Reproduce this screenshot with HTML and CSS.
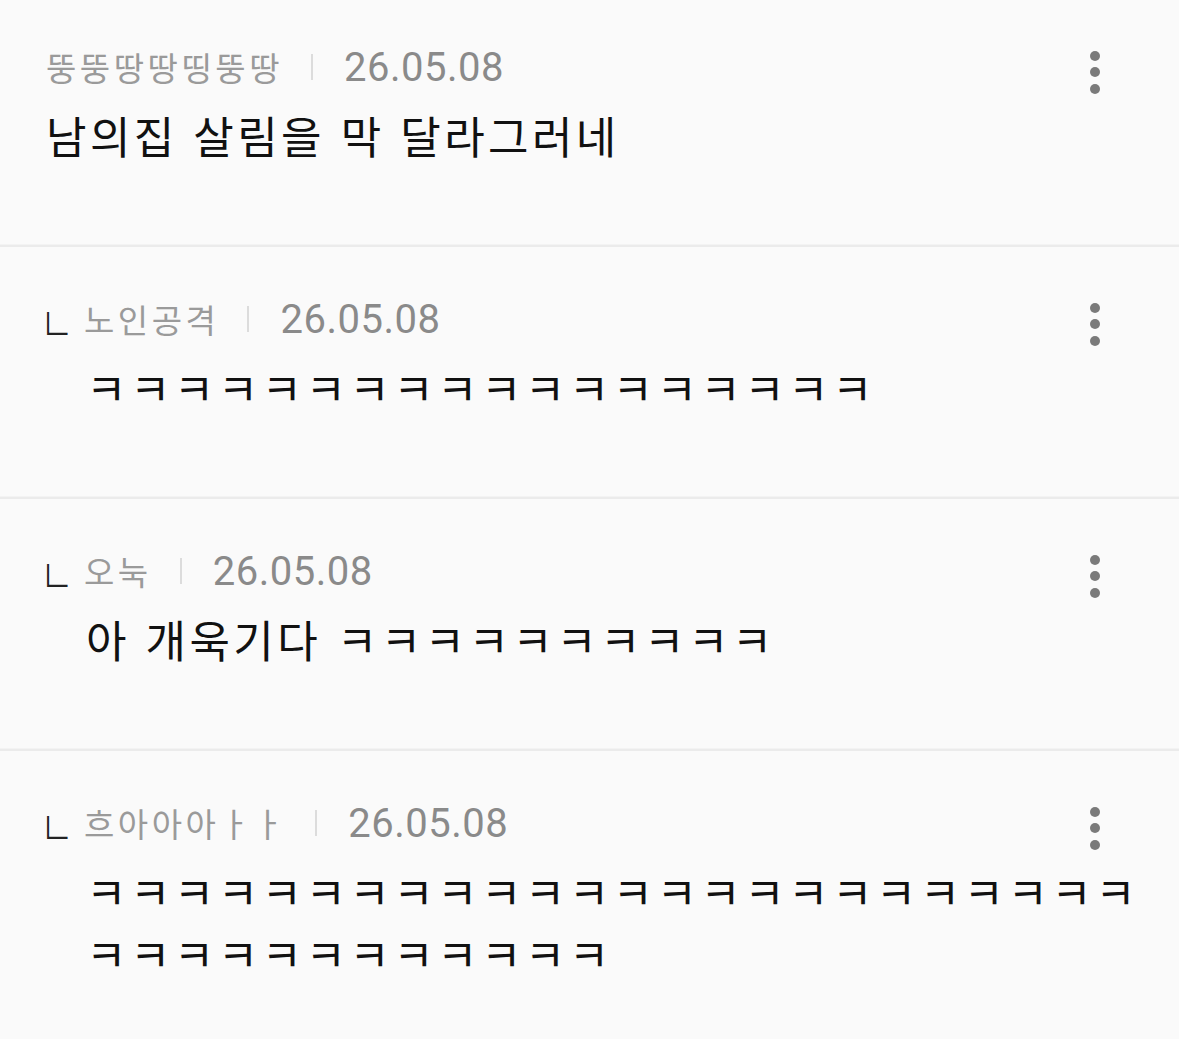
FILE: index.html
```html
<!DOCTYPE html>
<html lang="ko">
<head>
  <meta charset="UTF-8">
  <title>댓글</title>
  <link rel="stylesheet" href="styles.css">
</head>
<body>

<div class="comment-list">

  <div class="comment">
    <div class="comment-head">
      <span class="nick">뚱뚱땅땅띵뚱땅</span>
      <span class="divider"></span>
      <span class="date">26.05.08</span>
      <button class="more" aria-label="더보기"><i></i><i></i><i></i></button>
    </div>
    <p class="comment-text">남의집 살림을 막 달라그러네</p>
  </div>

  <div class="comment reply">
    <div class="comment-head">
      <span class="reply-mark">ㄴ</span>
      <span class="nick">노인공격</span>
      <span class="divider"></span>
      <span class="date">26.05.08</span>
      <button class="more" aria-label="더보기"><i></i><i></i><i></i></button>
    </div>
    <p class="comment-text">ㅋㅋㅋㅋㅋㅋㅋㅋㅋㅋㅋㅋㅋㅋㅋㅋㅋㅋ</p>
  </div>

  <div class="comment reply">
    <div class="comment-head">
      <span class="reply-mark">ㄴ</span>
      <span class="nick">오눅</span>
      <span class="divider"></span>
      <span class="date">26.05.08</span>
      <button class="more" aria-label="더보기"><i></i><i></i><i></i></button>
    </div>
    <p class="comment-text">아 개욱기다 ㅋㅋㅋㅋㅋㅋㅋㅋㅋㅋ</p>
  </div>

  <div class="comment reply">
    <div class="comment-head">
      <span class="reply-mark">ㄴ</span>
      <span class="nick">흐아아아ㅏㅏ</span>
      <span class="divider"></span>
      <span class="date">26.05.08</span>
      <button class="more" aria-label="더보기"><i></i><i></i><i></i></button>
    </div>
    <p class="comment-text">ㅋㅋㅋㅋㅋㅋㅋㅋㅋㅋㅋㅋㅋㅋㅋㅋㅋㅋㅋㅋㅋㅋㅋㅋㅋㅋㅋㅋㅋㅋㅋㅋㅋㅋㅋㅋ</p>
  </div>

</div>

</body>
</html>
```

FILE: styles.css
```css
body {
  margin: 0;
  background-color: #fafafa;
  font-family: "Noto Sans CJK KR", "Noto Sans", sans-serif;
  color: #111;
  overflow: hidden;
}
.comment-list {
  margin-top: -5px;
}
.comment {
  box-sizing: border-box;
  height: 252px;
  padding: 52px 20px 0 46px;
  border-bottom: 2px solid #ebebeb;
  box-shadow: 0 -3px 0 -2px #f3f3f3 inset;
}
.comment:last-child {
  height: auto;
  border-bottom: none;
  box-shadow: none;
}
.comment-head {
  display: flex;
  align-items: center;
  height: 40px;
  margin-right: 49px;
}
/* reply arrow: narrowed jamo so it reads as a thin corner */
.reply-mark {
  flex: none;
  width: 38px;
  font-size: 50px;
  font-weight: 300;
  line-height: 40px;
  color: #222;
  margin-left: -6px;
  margin-right: 6px;
  padding-top: 2px;
  transform: scaleX(0.73);
  transform-origin: left center;
}
.nick {
  font-size: 33px;
  letter-spacing: 3.5px;
  line-height: 40px;
  color: #9a9a9a;
  white-space: nowrap;
}
.divider {
  width: 2px;
  height: 26px;
  margin: 0 31px 0 28px;
  background-color: #dcdcdc;
}
.date {
  font-family: Roboto, "Liberation Sans", sans-serif;
  font-size: 40px;
  letter-spacing: 0.5px;
  color: #8a8a8a;
}
.more {
  margin-left: auto;
  width: 30px;
  height: 44px;
  padding: 0;
  border: none;
  background: none;
  display: flex;
  flex-direction: column;
  align-items: center;
  justify-content: center;
  gap: 6.5px;
  transform: translateY(5px);
}
.more i {
  width: 10px;
  height: 10px;
  border-radius: 50%;
  background-color: #7a7a7a;
}
.comment-text {
  margin: 17px 0 0;
  font-size: 44px;
  letter-spacing: 3.4px;
  line-height: 62px;
  word-break: break-all;
}
.reply .comment-text {
  padding-left: 40px;
}
```
